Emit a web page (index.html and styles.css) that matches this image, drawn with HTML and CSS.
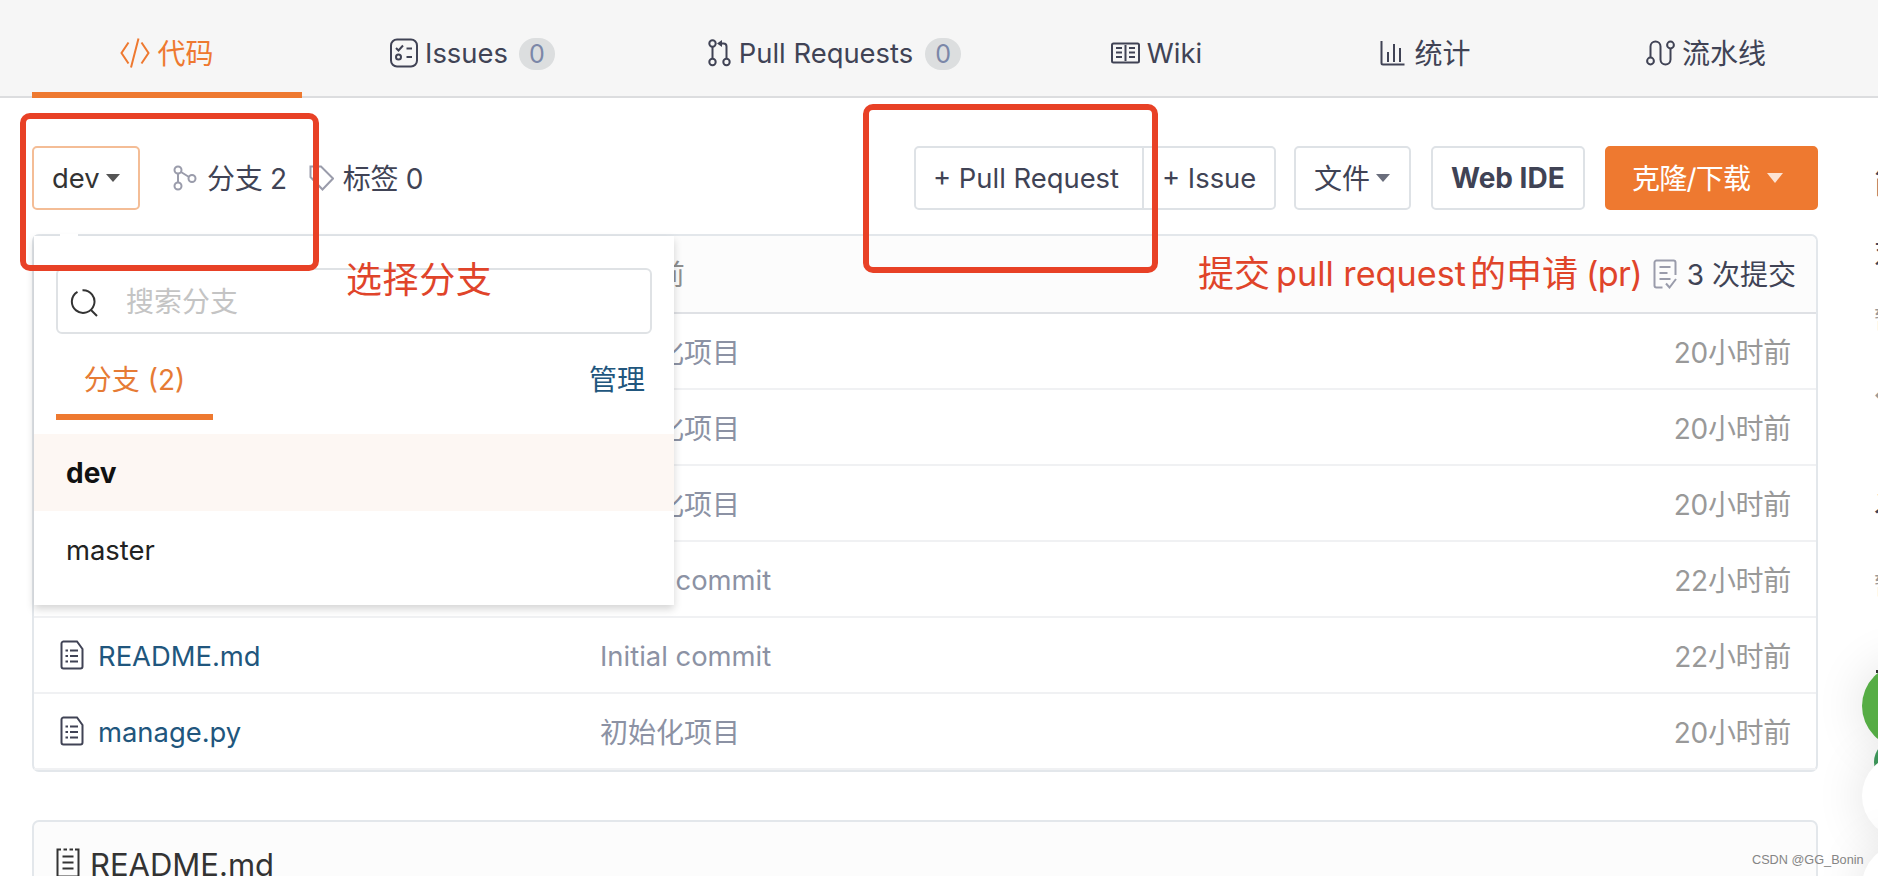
FILE: index.html
```html
<!DOCTYPE html>
<html lang="zh-CN">
<head>
<meta charset="utf-8">
<title>代码</title>
<link rel="stylesheet" href="styles.css">
</head>
<body>
<div class="page">
<nav class="tabs">
  <a class="tab tab-code active"><svg class="ico" width="30" height="32" viewBox="0 0 30 32"><path d="M8.500 5.500 1.500 16l7 10.500M21.500 5.500 28.500 16l-7 10.500M18.500 1.500 11 30.500"/></svg><span>代码</span></a>
  <a class="tab tab-issues"><svg class="ico" width="28" height="30" viewBox="0 0 28 30"><rect x="1" y="1.500" width="26" height="27" rx="6"/><path d="m6 10 2.500 2.500L13 7.500M16.500 10.500H22M16.500 19H22"/><circle cx="8.500" cy="19" r="2.500"/></svg><span class="lat">Issues</span><b class="count">0</b></a>
  <a class="tab tab-pr"><svg class="ico" width="23" height="28" viewBox="0 0 23 28"><circle cx="4.500" cy="4.500" r="3.200"/><circle cx="4.500" cy="23" r="3.200"/><circle cx="18.500" cy="23" r="3.200"/><path d="M4.500 8v12M18.500 20V7.500q0-3-3-3H13"/><path class="solid" d="M9 4.500 14 1v7z"/></svg><span class="lat">Pull Requests</span><b class="count">0</b></a>
  <a class="tab tab-wiki"><svg class="ico" width="29" height="22" viewBox="0 0 29 22"><rect x="1" y="1.500" width="27" height="19" rx="1.500"/><path d="M14.500 3v16M5 6h6M5 10.500h6M5 15h6M18 6h6M18 10.500h6M18 15h6"/></svg><span class="lat">Wiki</span></a>
  <a class="tab tab-stat"><svg class="ico" width="25" height="26" viewBox="0 0 25 26"><path d="M1.500 1v22q0 1.500 1.500 1.500H24.500M8 22V12M14 22V4M20 22V8"/></svg><span>统计</span></a>
  <a class="tab tab-pipe"><svg class="ico" width="29" height="26" viewBox="0 0 29 26"><circle cx="4.500" cy="21" r="3.400"/><circle cx="24.500" cy="5" r="3.400"/><path d="M4.500 17.500V6.500a5 5 0 0 1 10 0v13a5 5 0 0 0 10 0v-11"/></svg><span>流水线</span></a>
</nav>
<div class="main">
<div class="content">
  <div class="toolbar">
    <button class="btn btn-dev"><span class="lat">dev</span><i class="caret"></i></button>
    <a class="meta meta-branch"><svg class="ico" width="24" height="26" viewBox="0 0 24 26"><circle cx="5" cy="5" r="3.500"/><circle cx="5" cy="21" r="3.500"/><circle cx="19" cy="13.500" r="3.500"/><path d="M5 8.500v9M8 7l8 5"/></svg><span>分支 2</span></a>
    <a class="meta meta-tag"><svg class="ico" width="25" height="26" viewBox="0 0 25 26"><path d="M1.500 1.500H12L24 13.500 13.500 24.500 1.500 12z"/></svg><span>标签 0</span></a>
    <div class="group"><button class="btn btn-pull"><span class="lat">+ Pull Request</span></button><button class="btn btn-issue"><span class="lat">+ Issue</span></button></div>
    <button class="btn btn-file"><span>文件</span><i class="caret"></i></button>
    <button class="btn btn-ide"><span>Web IDE</span></button>
    <button class="btn btn-clone"><span>克隆/下载</span><i class="caret"></i></button>
  </div>
  <div class="files">
    <div class="files-head"><span class="when">20小时前</span>
      <span class="commits"><svg class="ico" width="24" height="30" viewBox="0 0 24 30"><path d="M9.500 28.500H3.500a2 2 0 0 1-2-2v-23a2 2 0 0 1 2-2h17a2 2 0 0 1 2 2V16M6.500 8h11M6.500 14h8M6.500 20h11M13 24.500l3.500 4L23 20"/></svg><span>3 次提交</span></span></div>
    <div class="row"><span class="name"></span><span class="msg">初始化项目</span><span class="time">20小时前</span></div>
    <div class="row"><span class="name"></span><span class="msg">初始化项目</span><span class="time">20小时前</span></div>
    <div class="row"><span class="name"></span><span class="msg">初始化项目</span><span class="time">20小时前</span></div>
    <div class="row"><span class="name"></span><span class="msg lat">Initial commit</span><span class="time">22小时前</span></div>
    <div class="row"><span class="name"><svg class="ico" width="24" height="30" viewBox="0 0 24 30"><path d="M3 1.500h14L22.500 9v17.500a2 2 0 0 1-2 2H3.500a2 2 0 0 1-2-2v-23a2 2 0 0 1 2-2M10 10.500h8M10 16h8M10 21.500h8M5.500 10.500H8M5.500 16H8M5.500 21.500H8"/></svg><span class="lat">README.md</span></span><span class="msg lat">Initial commit</span><span class="time">22小时前</span></div>
    <div class="row"><span class="name"><svg class="ico" width="24" height="30" viewBox="0 0 24 30"><path d="M3 1.500h14L22.500 9v17.500a2 2 0 0 1-2 2H3.500a2 2 0 0 1-2-2v-23a2 2 0 0 1 2-2M10 10.500h8M10 16h8M10 21.500h8M5.500 10.500H8M5.500 16H8M5.500 21.500H8"/></svg><span class="lat">manage.py</span></span><span class="msg">初始化项目</span><span class="time">20小时前</span></div>
  </div>
  <div class="readme"><svg class="ico" width="24" height="30" viewBox="0 0 24 30"><path d="M5 1.500H1.500v27h21v-27H19M7.500 1.500h3.500M13.500 1.500H17M6.500 8.500h11M6.500 14.500h11M6.500 20.500h11"/></svg><span>README.md</span></div>
</div>
<aside class="side">
  <div class="side-title">简介</div>
  <div class="side-dark">对项目</div>
  <div class="side-muted">暂无标签</div>
  <div class="side-muted side-code">◆</div>
  <div class="side-title side-rel">发行版</div>
  <div class="side-muted side-none">暂无发行版</div>
</aside>
</div>

<div class="dropdown">
  <i class="notch"></i>
  <div class="search"><svg class="ico" width="28" height="28" viewBox="0 0 28 28"><path d="M7.500 2.800A11.300 11.300 0 1 0 12.500 1.300M21 21l6 6"/></svg><span>搜索分支</span></div>
  <div class="drop-tabs"><span class="drop-tab">分支 (2)</span><a class="manage">管理</a></div>
  <div class="item selected">dev</div>
  <div class="item lat">master</div>
</div>

<div class="mark mark-branch"></div>
<div class="mark mark-pull"></div>
<div class="note note-branch">选择分支</div>
<div class="note note-pull"><span>提交</span><span class="n-pull">pull request</span><span class="n-apply">的申请</span><span class="n-pr">(pr)</span></div>

<i class="dash"></i>
<i class="bubble bubble-green"></i>
<i class="bubble bubble-small"></i>
<i class="bubble bubble-white"></i>
<i class="bubble bubble-low"></i>
<div class="watermark">CSDN @GG_Bonin</div>
</div>
</body>
</html>
```
FILE: styles.css
```css
* { box-sizing: border-box; }
body { margin: 0; background: #fff; color: #404355; font: 28px/1.2 Inter, "Noto Sans CJK SC", sans-serif; }
.page { position: relative; width: 1878px; height: 876px; overflow: hidden; background: #fff; }
.ico { flex: none; fill: none; stroke: currentColor; stroke-width: 2; }
.ico .solid { fill: currentColor; stroke: none; }
.lat { font-size: 27.4px; }
.tabs { display: flex; height: 98px; padding-left: 32px; background: #f6f6f6; border-bottom: 2px solid #dcdddf; }
.tab { display: flex; align-items: center; justify-content: center; height: 98px; border-bottom: 6px solid transparent; padding-top: 14px; gap: 7px; white-space: nowrap; }
.tab span, .btn span, .meta span { padding-top: 3px; }
.tab .lat, .btn .lat { padding-top: 1px; }
.tab-code { width: 270px; }
.tab-issues { width: 341px; }
.tab-pr { width: 383px; gap: 8px; }
.tab-wiki { width: 261px; }
.tab-stat { width: 277px; gap: 9px; }
.tab-pipe { width: 284px; }
.tab.active { color: #ee7930; border-bottom-color: #ee7930; }
.count { display: flex; align-items: center; justify-content: center; width: 36px; height: 32px; margin: 2px 0 0 4px; border-radius: 16px; background: #dcdedf; color: #7b87a8; font-size: 25px; font-weight: 400; }
.main { display: flex; padding-left: 32px; }
.content { flex: none; width: 1786px; }
.toolbar { display: flex; align-items: center; height: 136px; padding: 48px 0 24px; }
.btn { display: flex; align-items: center; height: 64px; padding: 0 18px; background: #fff; border: 2px solid #dee2e6; border-radius: 5px; color: #404355; font: inherit; white-space: nowrap; }
.caret { border: 7.5px solid transparent; border-top: 8px solid currentColor; border-bottom: 0; }
.btn-dev { width: 108px; padding: 0 0 0 18px; gap: 6px; border-color: #f4bd96; color: #333; }
.btn-dev .caret { color: #555; }
.meta { display: flex; align-items: center; white-space: nowrap; }
.meta .ico { color: #9a9cab; }
.meta-branch { margin-left: 33px; gap: 10px; }
.meta-branch span { letter-spacing: -.3px; }
.meta-tag { margin-left: 22px; gap: 9px; }
.meta-tag span { letter-spacing: -.3px; }
.group { display: flex; margin-left: auto; }
.btn-pull { width: 230px; padding-left: 17px; border-radius: 5px 0 0 5px; }
.btn-issue { width: 134px; margin-left: -2px; border-radius: 0 5px 5px 0; }
.btn-file { width: 117px; margin-left: 18px; padding: 0 0 0 18px; gap: 6px; }
.btn-file .caret { color: #6a6e7c; }
.btn-ide { width: 154px; margin-left: 20px; padding: 0 0 0 18px; font-weight: 700; }
.btn-ide span { padding-top: 1px; }
.btn-clone { width: 213px; margin-left: 20px; padding: 0 0 0 25px; gap: 17px; background: #ee7930; border-color: #ee7930; color: #fff; }
.btn-clone span { letter-spacing: -.8px; }
.btn-clone .caret { border-width: 10px 8.5px 0; color: #fde3d3; }
.files { border: 2px solid #e3e7eb; border-radius: 7px; }
.files-head { display: flex; align-items: center; justify-content: space-between; height: 78px; padding: 0 20px 0 532px; border-bottom: 2px solid #dfe1e5; background: #fcfcfc; border-radius: 6px 6px 0 0; }
.when { padding-top: 3px; color: #8f8f8f; }
.commits { display: flex; align-items: center; gap: 10px; }
.commits .ico { color: #9a9cab; }
.commits span { padding-top: 3px; }
.row { display: flex; align-items: center; height: 76px; padding: 0 25px 0 26px; border-bottom: 2px solid #f0f1f3; }
.row span { padding-top: 3px; }
.row .name { display: flex; align-items: center; gap: 14px; width: 540px; padding-top: 0; color: #21567d; }
.name .ico { color: #404355; }
.row .msg { flex: 1; padding-top: 5px; color: #8c92a4; }
.row .msg.lat { padding-top: 3px; }
.row .time { padding-top: 5px; color: #999; letter-spacing: -.3px; }
.readme { display: flex; gap: 10px; height: 90px; margin-top: 48px; padding: 26px 0 0 22px; border: 2px solid #e3e7eb; border-radius: 7px; background: #fcfcfc; color: #333; font-size: 31px; line-height: 34px; }
.side { flex: none; width: 280px; margin-left: 56px; padding-top: 61px; white-space: nowrap; }
.side-title { height: 46px; font-size: 32px; line-height: 46px; }
.side-dark { margin-top: 25px; height: 46px; line-height: 46px; }
.side-muted { margin-top: 22px; height: 40px; line-height: 44px; color: #999; font-size: 24px; }
.side-code { margin-top: 36px; }
.side-rel { margin-top: 65px; }
.side-none { margin-top: 39px; }
.dropdown { position: absolute; left: 34px; top: 236px; width: 640px; height: 369px; padding-top: 32px; background: #fff; box-shadow: 0 4px 8px rgba(0,0,0,.17); }
.notch { position: absolute; left: 26px; top: -2px; width: 18px; height: 2px; background: #fff; }
.search { display: flex; align-items: center; gap: 28px; width: 596px; height: 66px; margin-left: 22px; padding-left: 12px; border: 2px solid #dfe2e5; border-radius: 6px; color: #c4c4c4; }
.search .ico { color: #333; margin-top: 3px; }
.search span { padding-top: 3px; }
.drop-tabs { display: flex; justify-content: space-between; height: 86px; margin-bottom: 14px; padding: 0 29px 0 22px; line-height: 93px; }
.drop-tab { width: 157px; height: 86px; border-bottom: 6px solid #ee7930; color: #e67b35; text-align: center; }
.manage { color: #21567d; }
.item { height: 77px; padding-left: 32px; color: #222; line-height: 79px; }
.item.selected { background: #fdf7f3; color: #111; font-weight: 700; }
.mark { position: absolute; border: 6px solid #e84126; border-radius: 10px; }
.mark-branch { left: 20px; top: 113px; width: 299px; height: 158px; }
.mark-pull { left: 863px; top: 104px; width: 295px; height: 169px; }
.note { position: absolute; display: flex; color: #e0442a; font-size: 36px; line-height: 50px; white-space: nowrap; }
.note-branch { left: 346px; top: 255px; letter-spacing: .6px; }
.note-pull { left: 1198px; top: 249px; }
.n-pull, .n-pr { font-size: 34.2px; line-height: 50px; }
.n-pull { width: 193px; margin-left: 6px; }
.n-apply { margin-left: 1px; }
.n-pr { margin-left: 8px; letter-spacing: -.7px; }
.dash { position: absolute; left: 1876px; top: 670px; width: 2px; height: 3px; background: #333; }
.bubble { position: absolute; left: 1862px; width: 84px; height: 84px; border-radius: 50%; background: #fff; box-shadow: 0 0 50px rgba(0,0,0,.12); }
.bubble-green { top: 664px; background: #56ad45; }
.bubble-small { left: 1874px; top: 740px; width: 44px; height: 44px; background: #3f9a5c; box-shadow: none; }
.bubble-white { top: 754px; }
.bubble-low { top: 844px; }
.watermark { position: absolute; left: 1752px; top: 852px; color: #858585; font: 12.7px/16px "Liberation Sans", sans-serif; }
```
